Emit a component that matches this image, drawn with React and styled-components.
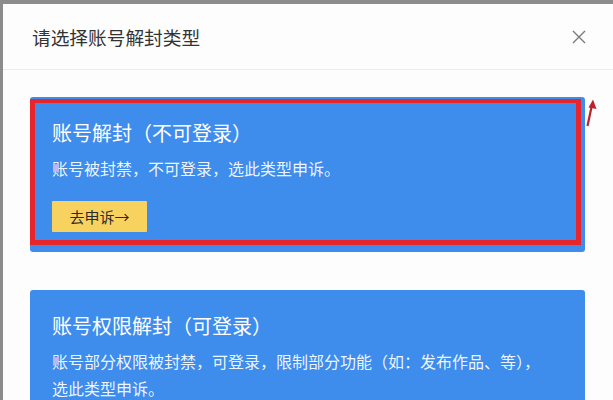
import React from "react";
import styled, { createGlobalStyle } from "styled-components";

const GlobalStyle = createGlobalStyle`
  html, body {
    margin: 0;
    padding: 0;
    background: #8c8c8c;
    overflow: hidden;
  }
  body {
    font-family: "Noto Sans CJK SC", "Noto Sans", sans-serif;
  }
`;

const Modal = styled.div`
  margin: 4px 0 0 3px;
  height: 396px;
  overflow: hidden;
  background: #fdfdfe;
  display: flex;
  flex-direction: column;
`;

const Header = styled.div`
  height: 65px;
  flex-shrink: 0;
  display: flex;
  align-items: center;
  justify-content: space-between;
  padding: 0 26px 0 29px;
  border-bottom: 1px solid #ececef;
`;

const Title = styled.h2`
  margin: 0;
  font-size: 18.7px;
  font-weight: 400;
  color: #333;
`;

const Close = styled.button`
  border: none;
  background: none;
  padding: 0;
  width: 16px;
  height: 16px;
  cursor: pointer;
  display: flex;
`;

const Body = styled.div`
  padding: 27px 28px 0 27px;
  display: flex;
  flex-direction: column;
  gap: 38px;
`;

const Card = styled.div`
  position: relative;
  flex-shrink: 0;
  background: #3e8cec;
  border-radius: 3px;
  padding: 22px 22px 20px;
  color: #fff;
`;

const CardTitle = styled.div`
  font-size: 20px;
  line-height: 28px;
`;

const CardText = styled.div`
  margin-top: 8px;
  font-size: 16px;
  line-height: 27px;
  color: rgba(255, 255, 255, 0.93);
  padding-right: ${(p) => p.$pr || 0}px;
`;

const Action = styled.button`
  margin-top: 19px;
  width: 95px;
  height: 31px;
  border: none;
  border-radius: 1px;
  background: #f8d25f;
  color: #2b2b2b;
  font-family: inherit;
  font-size: 15px;
  cursor: pointer;
`;

const Highlight = styled.div`
  position: absolute;
  left: 0;
  top: 2px;
  width: 551px;
  height: 146px;
  box-sizing: border-box;
  border: 5px solid #e6262c;
  border-top-width: 4px;
  pointer-events: none;
`;

const Arrow = styled.svg`
  position: absolute;
  left: 555px;
  top: 2px;
`;

const CloseIcon = () => (
  <svg width="16" height="16" viewBox="0 0 16 16">
    <path d="M2 2 L14 14 M14 2 L2 14" stroke="#7a7a7a" strokeWidth="1.4" />
  </svg>
);

export default function App() {
  return (
    <>
      <GlobalStyle />
      <Modal>
        <Header>
          <Title>请选择账号解封类型</Title>
          <Close aria-label="关闭">
            <CloseIcon />
          </Close>
        </Header>
        <Body>
          <Card>
            <CardTitle>账号解封（不可登录）</CardTitle>
            <CardText>账号被封禁，不可登录，选此类型申诉。</CardText>
            <Action>去申诉→</Action>
            <Highlight />
            <Arrow width="12" height="28" viewBox="0 0 12 28">
              <path d="M2.5 27 L6.5 8" stroke="#b9232b" strokeWidth="2.2" />
              <path d="M8 0.5 L11.5 10 L3.5 8.5 Z" fill="#b9232b" />
            </Arrow>
          </Card>
          <Card>
            <CardTitle>账号权限解封（可登录）</CardTitle>
            <CardText $pr={10}>
              账号部分权限被封禁，可登录，限制部分功能（如：发布作品、等），选此类型申诉。
            </CardText>
          </Card>
        </Body>
      </Modal>
    </>
  );
}
